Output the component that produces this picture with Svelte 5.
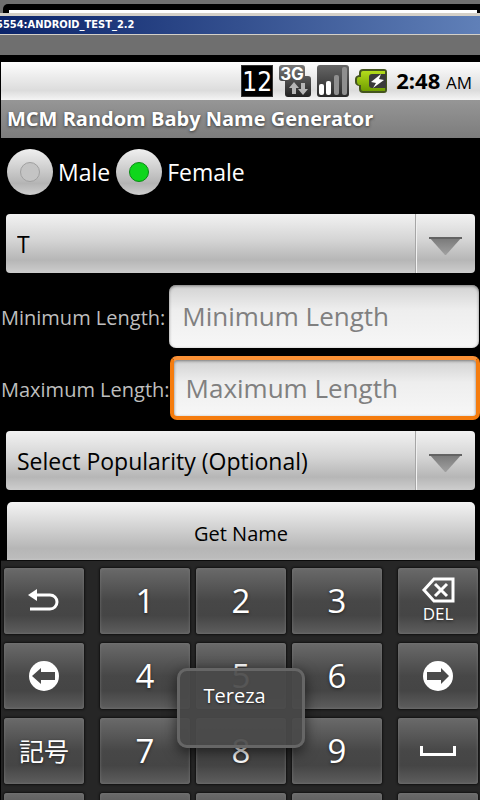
<script lang="ts">
	let gender = $state('female');
	let letter = $state('T');
	let popularity = $state('Select Popularity (Optional)');
	let minLength = $state('');
	let maxLength = $state('');

	const keys = ['back', '1', '2', '3', 'del', 'left', '4', '5', '6', 'right', '記号', '7', '8', '9', 'space', '', '', '', '', ''];
</script>

{#snippet arrow()}
	<svg class="arrow" viewBox="0 0 34 20" aria-hidden="true">
		<defs>
			<linearGradient id="arrow-fill" x1="0" y1="0" x2="0" y2="1">
				<stop offset="0" stop-color="#777" />
				<stop offset="1" stop-color="#a0a0a0" />
			</linearGradient>
		</defs>
		<path d="M0 1H33L17 19H16Z" fill="url(#arrow-fill)" />
		<path d="M0 1H33V3H0Z" fill="#636363" />
	</svg>
{/snippet}

<div class="screen">
	<div class="window-behind"><div class="window-edge"></div></div>
	<div class="title-bar">5554:ANDROID_TEST_2.2</div>
	<div class="window-gap"></div>

	<div class="device">
		<div class="status-bar">
			<span class="badge">12</span>
			<svg class="status-icon" viewBox="0 0 32 32">
				<defs>
					<linearGradient id="network-bg" x1="0" y1="0" x2="0" y2="1">
						<stop offset="0" stop-color="#777" />
						<stop offset="1" stop-color="#222" />
					</linearGradient>
				</defs>
				<path d="M3 0H23Q26 0 26 3V11H29Q32 11 32 14V29Q32 32 29 32H9Q6 32 6 29V16H3Q0 16 0 13V3Q0 0 3 0Z" fill="url(#network-bg)" />
				<text class="network" x="13" y="15" text-anchor="middle">3G</text>
				<path d="M15 17L20 23H17V29H13V23H10Z" fill="#b5b5b5" />
				<path d="M22 18H26V24H29L24 30L19 24H22Z" fill="#b5b5b5" />
			</svg>
			<svg class="status-icon" viewBox="0 0 32 32" aria-hidden="true">
				<defs>
					<linearGradient id="signal-bg" x1="0" y1="0" x2="0" y2="1">
						<stop offset="0" stop-color="#666" />
						<stop offset="1" stop-color="#292929" />
					</linearGradient>
				</defs>
				<rect width="32" height="32" rx="3" fill="url(#signal-bg)" />
				<rect x="2" y="19" width="5" height="11" rx="2" fill="#fff" />
				<rect x="9" y="16" width="5" height="14" rx="2" fill="#fff" />
				<rect x="17" y="10" width="5" height="20" rx="2" fill="#8f8f8f" />
				<rect x="25" y="2" width="5" height="28" rx="2" fill="#8f8f8f" />
			</svg>
			<svg class="status-icon" viewBox="0 0 32 32" aria-hidden="true">
				<defs>
					<linearGradient id="battery-fill" x1="0" y1="0" x2="0" y2="1">
						<stop offset="0" stop-color="#b4dc1c" />
						<stop offset="1" stop-color="#6f9c00" />
					</linearGradient>
				</defs>
				<path d="M8 4H29Q32 4 32 7V25Q32 28 29 28H8Q4 28 4 24V21Q0 20 0 17V14Q0 11 4 10V8Q4 4 8 4Z" fill="#45551f" />
				<path d="M8 6H30V26H8Q6 26 6 24V20H4Q2 19 2 17V14Q2 12 4 12H6V8Q6 6 8 6Z" fill="url(#battery-fill)" />
				<path d="M17 9H31V23H17Q14 23 14 20V12Q14 9 17 9Z" fill="#3a3a3a" />
				<path d="M26 9L16 17L21 18L18 23L29 15L24 14Z" fill="#fff" />
			</svg>
			<span class="time">2:48 <small>AM</small></span>
		</div>
		<h1>MCM Random Baby Name Generator</h1>

		<form class="form" onsubmit={(e) => e.preventDefault()}>
			<div class="radios">
				<label><input type="radio" name="gender" value="male" bind:group={gender} />Male</label>
				<label><input type="radio" name="gender" value="female" bind:group={gender} />Female</label>
			</div>

			<div class="spinner">
				<select bind:value={letter}>
					<option>T</option>
				</select>
				{@render arrow()}
			</div>

			<div class="field first">
				<label for="min">Minimum Length:</label>
				<input id="min" type="text" placeholder="Minimum Length" bind:value={minLength} />
			</div>
			<div class="field active">
				<label for="max">Maximum Length:</label>
				<input id="max" type="text" placeholder="Maximum Length" bind:value={maxLength} />
			</div>

			<div class="spinner">
				<select bind:value={popularity}>
					<option>Select Popularity (Optional)</option>
				</select>
				{@render arrow()}
			</div>

			<button class="submit" type="submit">Get Name</button>
		</form>

		<div class="keyboard">
			{#each keys as key}
				<button class="key" class:kanji={key === '記号'} type="button">
					{#if key === 'back'}
						<svg width="32" height="24" viewBox="0 0 32 24">
							<path d="M8 6H22A7 7 0 0 1 22 20H2" fill="none" stroke="#fff" stroke-width="3" />
							<path d="M0 6L9 0V12Z" fill="#fff" />
						</svg>
					{:else if key === 'del'}
						<svg width="34" height="26" viewBox="0 0 34 26">
							<path d="M13 2H32V24H13L3 13Z" fill="none" stroke="#fff" stroke-width="3" />
							<path d="M14 7L26 19M26 7L14 19" stroke="#fff" stroke-width="3" />
						</svg>
						<span class="del">DEL</span>
					{:else if key === 'left'}
						<svg width="30" height="30" viewBox="0 0 30 30">
							<circle cx="15" cy="15" r="15" fill="#fff" />
							<path d="M3 15L12 7V11H26V19H12V23Z" fill="#4a4a4a" />
						</svg>
					{:else if key === 'right'}
						<svg width="30" height="30" viewBox="0 0 30 30">
							<circle cx="15" cy="15" r="15" fill="#fff" />
							<path d="M26 15L18 7V11H4V19H18V23Z" fill="#4a4a4a" />
						</svg>
					{:else if key === 'space'}
						<svg width="36" height="10" viewBox="0 0 36 10">
							<path d="M1.5 0V8.5H34.5V0" fill="none" stroke="#fff" stroke-width="3" />
						</svg>
					{:else}
						{key}
					{/if}
				</button>
			{/each}
			<div class="toast">Tereza</div>
		</div>
	</div>
</div>

<style>
	:global(body) {
		margin: 0;
		background: #000;
	}

	.screen {
		height: 100vh;
		overflow: hidden;
		background: #6f6f6f;
		font-family: 'Open Sans', 'Noto Sans', 'Noto Sans CJK JP', sans-serif;
	}

	.screen * {
		box-sizing: border-box;
	}

	.window-behind {
		margin: 4px 0 0 3px;
		padding: 6px 3px 0 6px;
		background: #000;
		border-top-left-radius: 5px;
	}

	.window-edge {
		height: 3px;
		background: #fff;
	}

	.title-bar {
		height: 22px;
		border-top: 3px solid #d4d0c8;
		border-bottom: 1px solid #d4d0c8;
		background: linear-gradient(90deg, #0b246a, #34508f 50%, #6080b8);
		color: #fff;
		font-family: 'DejaVu Sans Condensed', 'DejaVu Sans', sans-serif;
		font-size: 11px;
		font-weight: 700;
		line-height: 18px;
		text-indent: -4px;
		white-space: nowrap;
	}

	.window-gap {
		height: 20px;
	}

	.device {
		border-top: 7px solid #000;
		border-left: 1px solid #000;
		background: #000;
	}

	.status-bar {
		height: 38px;
		padding-right: 8px;
		display: flex;
		align-items: center;
		justify-content: flex-end;
		gap: 6px;
		background: linear-gradient(#fff, #f0f0f0 30%, #dcdcdc 75%, #f4f4f4);
	}

	.badge {
		width: 32px;
		height: 32px;
		border: 1px solid #333;
		background: #000;
		color: #fff;
		font-family: 'DejaVu Sans Condensed', 'DejaVu Sans', sans-serif;
		font-size: 26px;
		line-height: 32px;
		text-align: center;
	}

	.status-icon {
		width: 32px;
		height: 32px;
	}

	.network {
		fill: #fff;
		font-family: Inter, sans-serif;
		font-size: 17px;
		font-weight: 700;
	}

	.time {
		margin-left: 3px;
		font-size: 22px;
		font-weight: 700;
		line-height: 32px;
		white-space: nowrap;
	}

	.time small {
		font-size: 17px;
		font-weight: 500;
	}

	h1 {
		height: 38px;
		margin: 0;
		padding-left: 6px;
		background: linear-gradient(#969696, #7c7c7c);
		color: #fff;
		font-size: 20px;
		line-height: 37px;
		text-shadow: 0 1px 3px #333;
		white-space: nowrap;
	}

	.form {
		height: 422px;
		overflow: hidden;
	}

	.radios {
		display: flex;
		gap: 6px;
		padding: 11px 6px 19px;
	}

	.radios label {
		display: flex;
		align-items: center;
		gap: 5px;
		height: 46px;
		color: #fff;
		font-size: 23px;
	}

	.radios input {
		appearance: none;
		width: 46px;
		height: 46px;
		margin: 0;
		display: grid;
		place-items: center;
		border-radius: 50%;
		background: linear-gradient(#f0f0f0, #b4b4b4 75%, #cfcfcf);
	}

	.radios input::before {
		content: '';
		width: 20px;
		height: 20px;
		box-sizing: border-box;
		border: 1px solid #a0a0a0;
		border-radius: 50%;
		background: #c4c4c4;
	}

	.radios input:checked::before {
		border-color: #0a8a14;
		background: #0fd61c;
	}

	.spinner {
		display: grid;
		align-items: center;
		margin: 0 5px;
	}

	.spinner select {
		grid-area: 1 / 1;
		appearance: none;
		width: 100%;
		height: 59px;
		padding: 0 64px 0 11px;
		border: 0;
		border-radius: 4px;
		background:
			linear-gradient(#a6a6a6, #a6a6a6) right 59px top / 1px 100% no-repeat,
			linear-gradient(#eee, #f4f4f4) right 58px top / 1px 100% no-repeat,
			linear-gradient(#f2f2f2, #d4d4d4 45%, #b6b6b6 78%, #cdcdcd);
		color: #000;
		font-family: inherit;
		font-size: 23px;
	}

	.arrow {
		grid-area: 1 / 1;
		justify-self: end;
		width: 34px;
		height: 20px;
		margin: 4px 12px 0 0;
		pointer-events: none;
	}

	.field {
		display: flex;
		align-items: center;
		height: 64px;
	}

	.field.first {
		margin: 11px 1px 8px 0;
		gap: 4px;
	}

	.field.active {
		margin-bottom: 11px;
	}

	.field label {
		flex: none;
		color: #bebebe;
		font-size: 20px;
		line-height: 28px;
		padding-top: 4px;
	}

	.field input {
		flex: 1;
		min-width: 0;
		height: 63px;
		padding: 0 13px;
		border: 0;
		border-radius: 7px;
		outline: 0;
		background: linear-gradient(#d2d2d2, #eee 40%, #f7f7f7);
		box-shadow: inset 0 1px 3px #777;
		color: #000;
		font-family: inherit;
		font-size: 26px;
	}

	.field input::placeholder {
		color: #808080;
		opacity: 1;
	}

	.active input {
		height: 64px;
		padding: 0 12px;
		border: 4px solid #f57c0e;
		border-top-color: #fb9136;
	}

	.submit {
		display: block;
		width: calc(100% - 11px);
		height: 62px;
		margin: 12px 5px 0 6px;
		border: 0;
		border-radius: 5px;
		background: linear-gradient(#f4f4f4, #b6b6b6 75%, #bbb 90%, #d0d0d0);
		color: #000;
		font-family: inherit;
		font-size: 20px;
	}

	.keyboard {
		position: relative;
		display: grid;
		grid-template-columns: repeat(5, 1fr);
		gap: 9px 6px;
		padding: 7px 2px 0 3px;
		border-top: 1px solid #0c0c0c;
		background: #262626;
	}

	.key {
		height: 66px;
		padding: 0;
		display: flex;
		flex-direction: column;
		align-items: center;
		justify-content: center;
		border: 0;
		border-radius: 3px;
		background: linear-gradient(#6a6a6a, #474747 50%, #454545 72%, #5e5e5e);
		box-shadow: 0 0 2px 1px #111, inset 0 0 3px #777;
		color: #fff;
		font-family: inherit;
		font-size: 33px;
		line-height: 40px;
		text-shadow: 0 1px 3px #222;
	}

	.key:nth-child(5n + 1) {
		margin-right: 10px;
	}

	.key:nth-child(5n) {
		margin-left: 10px;
	}

	.key.kanji {
		font-size: 25px;
	}

	.del {
		font-size: 17px;
		line-height: 22px;
	}

	.toast {
		position: absolute;
		top: 107px;
		left: 50%;
		width: 128px;
		height: 80px;
		margin-left: -64px;
		padding: 11px 24px;
		border: 3px solid #666;
		border-radius: 10px;
		background: rgba(73, 73, 73, 0.93);
		box-shadow: 0 4px 14px rgba(0, 0, 0, 0.6);
		color: #fff;
		font-size: 20px;
		line-height: 28px;
		text-shadow: 0 1px 2px #222;
	}
</style>
